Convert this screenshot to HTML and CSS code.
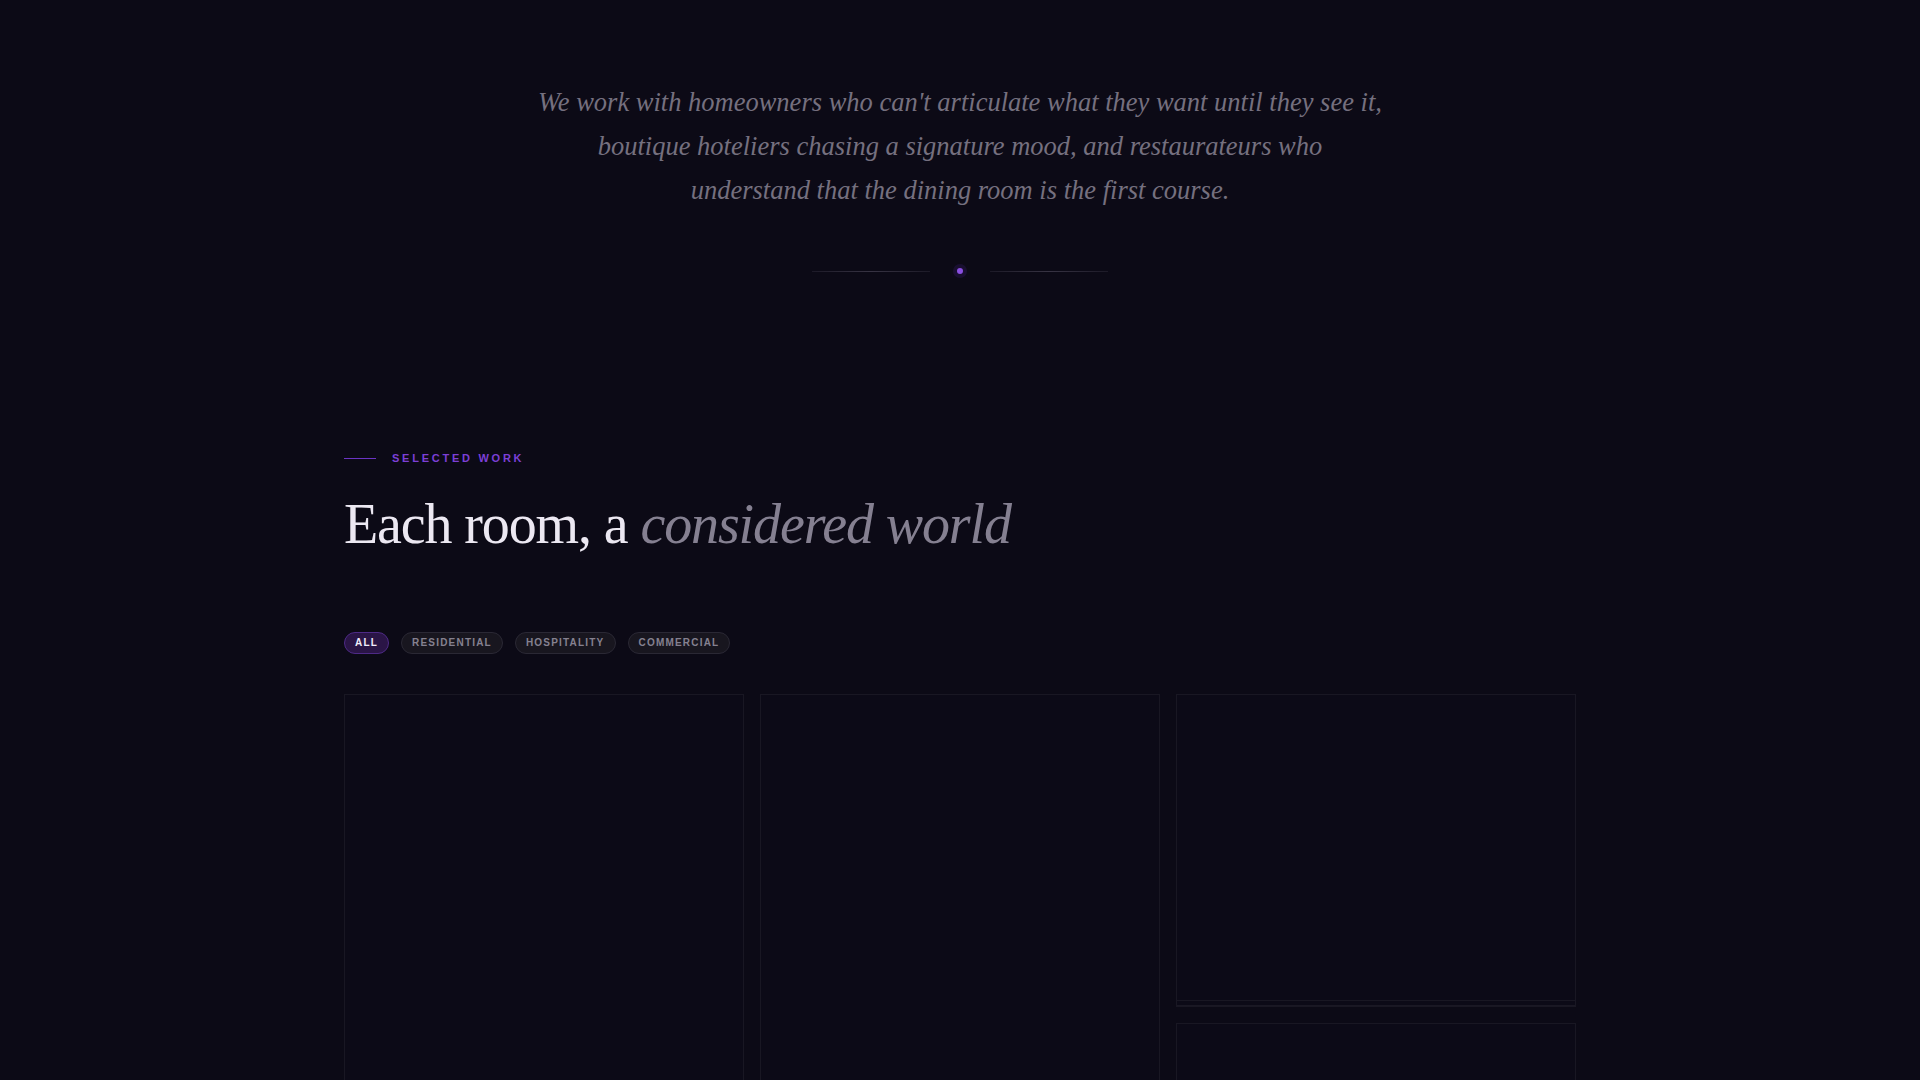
FILE: index.html
```html
<!DOCTYPE html>
<html lang="en">
<head>
<meta charset="utf-8">
<title>Selected Work</title>
<link rel="stylesheet" href="styles.css">
</head>
<body>
<section class="intro">
  <p class="quote">We work with homeowners who can't articulate what they want until they see it, boutique hoteliers chasing a signature mood, and restaurateurs who understand that the dining room is the first course.</p>
  <div class="divider">
    <span class="divider-line"></span>
    <span class="divider-dot"></span>
    <span class="divider-line"></span>
  </div>
</section>

<section class="work">
  <div class="eyebrow"><span class="eyebrow-line"></span><span class="eyebrow-text">SELECTED WORK</span></div>
  <h2 class="title">Each room, a <em>considered world</em></h2>
  <div class="filters">
    <button class="pill pill-active">ALL</button>
    <button class="pill">RESIDENTIAL</button>
    <button class="pill">HOSPITALITY</button>
    <button class="pill">COMMERCIAL</button>
  </div>
  <div class="grid">
    <div class="col">
      <div class="card card-tall"><div class="card-media"></div></div>
    </div>
    <div class="col">
      <div class="card card-tall"><div class="card-media"></div></div>
    </div>
    <div class="col">
      <div class="card card-short"><div class="card-media"></div><div class="card-foot"></div></div>
      <div class="card card-tall"><div class="card-media"></div></div>
    </div>
  </div>
</section>
</body>
</html>
```

FILE: styles.css
```css
* { box-sizing: border-box; }

html, body {
  margin: 0;
  padding: 0;
  background: #0c0a16;
  color: #ece8f2;
  font-family: "Liberation Serif", "Times New Roman", serif;
  overflow: hidden;
}

.intro {
  padding-top: 80px;
  display: flex;
  flex-direction: column;
  align-items: center;
}

.quote {
  margin: 0;
  max-width: 847px;
  text-align: center;
  font-style: italic;
  font-size: 26.5px;
  line-height: 44px;
  color: #75707f;
}

.divider {
  margin-top: 56px;
  display: flex;
  align-items: center;
  gap: 27px;
}

.divider-line {
  width: 118px;
  height: 1px;
  background: linear-gradient(90deg, rgba(60,56,72,0.35), rgba(60,56,72,0.9), rgba(60,56,72,0.35));
}

.divider-dot {
  width: 6px;
  height: 6px;
  border-radius: 50%;
  background: #8a4fe0;
  box-shadow: 0 0 0 4px rgba(124, 58, 237, 0.12);
}

.work {
  width: 1232px;
  margin: 0 auto;
  padding-top: 176px;
}

.eyebrow {
  display: flex;
  align-items: center;
  gap: 16px;
  height: 16px;
}

.eyebrow-line {
  width: 32px;
  height: 1px;
  background: #6b34c4;
}

.eyebrow-text {
  font-family: "Liberation Sans", Arial, sans-serif;
  font-weight: 700;
  font-size: 11px;
  letter-spacing: 0.25em;
  color: #7c3fd6;
}

.title {
  margin: 26px 0 0;
  font-weight: 400;
  font-size: 56px;
  line-height: 64px;
  letter-spacing: -0.02em;
  color: #ece8f2;
}

.title em {
  color: #858091;
}

.filters {
  margin-top: 76px;
  display: flex;
  gap: 12px;
}

.pill {
  font-family: "Liberation Sans", Arial, sans-serif;
  font-weight: 700;
  font-size: 10px;
  line-height: 12px;
  letter-spacing: 0.12em;
  padding: 4px 10px;
  border-radius: 999px;
  border: 1px solid #2a2834;
  background: #18161f;
  color: #858190;
}

.pill-active {
  background: #2a1546;
  border-color: #4e2a86;
  color: #f1ecfa;
}

.grid {
  margin-top: 40px;
  display: grid;
  grid-template-columns: repeat(3, 1fr);
  gap: 16px;
  align-items: start;
}

.col {
  display: flex;
  flex-direction: column;
  gap: 16px;
}

.card {
  border: 1px solid #191723;
  background: #0c0a17;
}

.card-tall .card-media {
  height: 520px;
}

.card-short .card-media {
  height: 306px;
  border-bottom: 1px solid #191723;
}

.card-foot {
  height: 5px;
  border-bottom: 1px solid #1a1824;
}
```
